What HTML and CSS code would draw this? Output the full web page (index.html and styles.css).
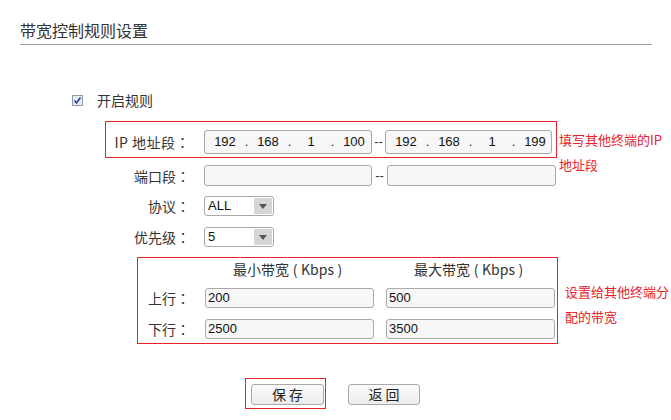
FILE: index.html
```html
<!DOCTYPE html>
<html lang="zh-CN">
<head>
<meta charset="utf-8">
<title>带宽控制规则设置</title>
<link rel="stylesheet" href="styles.css">
</head>
<body>
<div class="page">
  <h1 class="title">带宽控制规则设置</h1>

  <div class="row-check">
    <span class="checkbox"><svg width="11" height="11" viewBox="0 0 11 11"><rect x="0.5" y="0.5" width="10" height="10" fill="#e8ecf4" stroke="#8c98b0"/><path d="M2.5 5.5 L4.5 8 L8.5 2.5" fill="none" stroke="#2a3f9a" stroke-width="1.6"/></svg></span>
    <span class="check-text">开启规则</span>
  </div>

  <div class="ip-line">
    <div class="ip-box">
      <span class="label ip-label">IP 地址段<span class="colon" lang="ja">：</span></span>
      <div class="field ip-field">
        <span class="seg">192</span><span class="dot">.</span><span class="seg">168</span><span class="dot">.</span><span class="seg">1</span><span class="dot">.</span><span class="seg">100</span>
      </div>
      <span class="dash">--</span>
      <div class="field ip-field">
        <span class="seg">192</span><span class="dot">.</span><span class="seg">168</span><span class="dot">.</span><span class="seg">1</span><span class="dot">.</span><span class="seg">199</span>
      </div>
    </div>
    <div class="note note-ip">填写其他终端的IP<br>地址段</div>
  </div>

  <div class="row row-port">
    <span class="label">端口段<span class="colon" lang="ja">：</span></span>
    <div class="field port-field"></div>
    <span class="dash dash-port">--</span>
    <div class="field port-field2"></div>
  </div>

  <div class="row row-proto">
    <span class="label">协议<span class="colon" lang="ja">：</span></span>
    <div class="select"><span class="sel-text">ALL</span><span class="arrow"></span></div>
  </div>

  <div class="row row-prio">
    <span class="label">优先级<span class="colon" lang="ja">：</span></span>
    <div class="select"><span class="sel-text">5</span><span class="arrow"></span></div>
  </div>

  <div class="bw-line">
    <div class="bw-box">
      <div class="bw-head">
        <span class="bw-spacer"></span>
        <span class="bw-col">最小带宽<span class="paren">(</span>Kbps<span class="paren">)</span></span>
        <span class="bw-col">最大带宽<span class="paren">(</span>Kbps<span class="paren">)</span></span>
      </div>
      <div class="bw-row bw-up">
        <span class="bw-label">上行<span class="colon" lang="ja">：</span></span>
        <div class="field bw-field">200</div>
        <div class="field bw-field">500</div>
      </div>
      <div class="bw-row bw-down">
        <span class="bw-label">下行<span class="colon" lang="ja">：</span></span>
        <div class="field bw-field">2500</div>
        <div class="field bw-field">3500</div>
      </div>
    </div>
    <div class="note note-bw">设置给其他终端分<br>配的带宽</div>
  </div>

  <div class="buttons">
    <div class="save-wrap"><button class="btn btn-save">保 存</button></div>
    <button class="btn btn-back">返 回</button>
  </div>
</div>
</body>
</html>
```

FILE: styles.css
```css
* { box-sizing: border-box; }
html, body { margin: 0; padding: 0; background: #fff; }
body {
  width: 671px;
  height: 420px;
  overflow: hidden;
  font-family: "Noto Sans CJK SC", "Liberation Sans", sans-serif;
  font-size: 14px;
  color: #333;
}
.colon { font-family: "Noto Sans CJK JP", "Noto Sans CJK SC", sans-serif; }
.paren { display: inline-block; width: 12px; text-align: center; }
.title {
  margin: 0 19px 0 20px;
  padding: 18px 0 2px 0;
  font-size: 16px;
  line-height: 24px;
  font-weight: normal;
  color: #333;
  border-bottom: 1px solid #9a9a9a;
}
.row-check {
  display: flex;
  align-items: center;
  height: 20px;
  margin-top: 45px;
  padding-left: 72px;
}
.checkbox { display: flex; width: 11px; height: 11px; }
.check-text { margin-left: 14px; line-height: 20px; }

.label {
  width: 190px;
  text-align: right;
  line-height: 20px;
  flex: none;
  white-space: nowrap;
}
.field {
  border: 1px solid #a9a9a9;
  border-radius: 3px;
  background: #f7f7f7;
  font-family: "Liberation Sans", "Noto Sans CJK SC", sans-serif;
  font-size: 13px;
  color: #111;
  flex: none;
}
.dash {
  width: 13px;
  text-align: center;
  font-family: "Liberation Sans", sans-serif;
  font-size: 13px;
  line-height: 24px;
  color: #333;
  flex: none;
}

.ip-line { display: flex; align-items: flex-start; margin-top: 11px; }
.ip-box {
  display: flex;
  align-items: center;
  margin-left: 105px;
  border: 1px solid #e8212a;
  padding: 8px 4px 3px 0;
}
.ip-label { width: 84px; margin-right: 14px; letter-spacing: 0.5px; }
.ip-field {
  display: flex;
  align-items: center;
  height: 24px;
  width: 168px;
  padding-left: 5px;
}
.ip-field + .dash + .ip-field { width: 167px; }
.seg { width: 30px; text-align: center; line-height: 22px; }
.dot { width: 13px; text-align: center; line-height: 22px; }
.note {
  color: #e8212a;
  font-size: 13px;
  line-height: 25px;
  margin-left: 2px;
  white-space: nowrap;
}
.note-ip { padding-top: 6px; height: 37px; }

.row { display: flex; align-items: center; }
.row .label { margin-right: 14px; }
.row-port { margin-top: 7px; }
.port-field { width: 168px; height: 21px; }
.dash-port { width: 15px; line-height: 21px; }
.port-field2 { width: 169px; height: 21px; }
.row-proto { margin-top: 10px; }
.row-prio { margin-top: 11px; }
.select {
  display: flex;
  align-items: center;
  justify-content: space-between;
  width: 70px;
  height: 20px;
  border: 1px solid #a9a9a9;
  border-radius: 3px;
  background: #fff;
  padding: 1px;
  font-family: "Liberation Sans", sans-serif;
  font-size: 13px;
  color: #111;
}
.sel-text { padding-left: 2px; line-height: 16px; }
.arrow {
  position: relative;
  width: 18px;
  height: 16px;
  background: #d6d6d6;
  border-radius: 1px;
}
.arrow::after {
  content: "";
  position: absolute;
  left: 5px;
  top: 6px;
  border-left: 4px solid transparent;
  border-right: 4px solid transparent;
  border-top: 5px solid #555;
}

.bw-line { display: flex; align-items: flex-start; margin-top: 10px; }
.bw-box {
  margin-left: 137px;
  width: 421px;
  border: 1px solid #e8212a;
  padding: 0 2px 4px 0;
}
.bw-head { display: flex; height: 22px; align-items: center; }
.bw-spacer { width: 67px; flex: none; }
.bw-col { width: 169px; margin-right: 12px; text-align: center; line-height: 20px; white-space: nowrap; flex: none; }
.bw-col:last-child { margin-right: 0; }
.bw-row { display: flex; align-items: center; }
.bw-up { margin-top: 8px; }
.bw-down { margin-top: 11px; }
.bw-label { width: 42px; margin-left: 10px; margin-right: 15px; line-height: 20px; flex: none; white-space: nowrap; }
.bw-field {
  width: 169px;
  height: 20px;
  line-height: 18px;
  padding-left: 2px;
  margin-right: 12px;
}
.bw-field:last-child { margin-right: 0; }
.note-bw { margin-left: 7px; margin-top: 22px; }

.buttons { display: flex; align-items: flex-start; margin-top: 34px; padding-left: 245px; }
.save-wrap {
  border: 1px solid #e8212a;
  padding: 5px 1px 3px 5px;
}
.btn {
  display: block;
  height: 21px;
  padding: 0;
  border: 1px solid #a9a9a9;
  border-radius: 3px;
  background: linear-gradient(#fbfbfb, #ececec);
  font-family: "Noto Sans CJK SC", sans-serif;
  font-size: 14px;
  line-height: 19px;
  color: #222;
}
.btn-save { width: 73px; }
.btn-back { width: 72px; margin-left: 22px; margin-top: 6px; }
```
